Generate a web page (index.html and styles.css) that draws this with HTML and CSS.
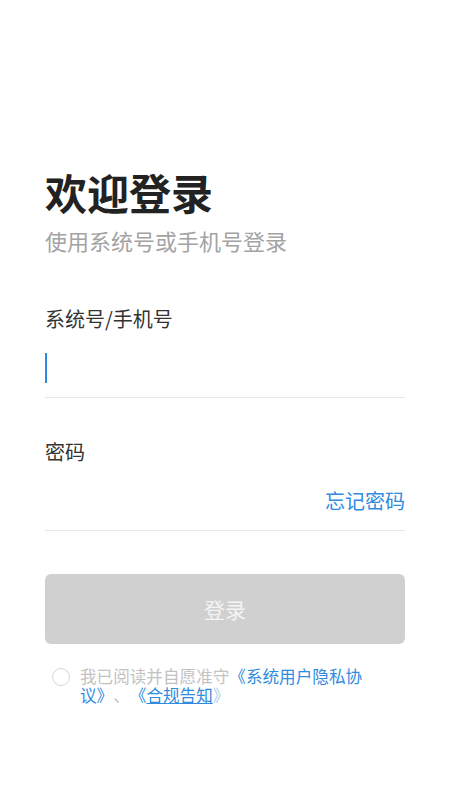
FILE: index.html
```html
<!DOCTYPE html>
<html lang="zh-CN">
<head>
    <meta charset="UTF-8">
    <meta name="viewport" content="width=device-width, initial-scale=1.0">
    <title>登录</title>
    <link rel="stylesheet" href="styles.css">
</head>
<body>
    <div class="login">
        <h1 class="title">欢迎登录</h1>
        <p class="subtitle">使用系统号或手机号登录</p>

        <div class="field">
            <label class="label">系统号/手机号</label>
            <div class="input-row">
                <span class="cursor"></span>
            </div>
        </div>

        <div class="field">
            <label class="label">密码</label>
            <div class="input-row">
                <a class="forgot" href="#">忘记密码</a>
            </div>
        </div>

        <button class="submit" disabled>登录</button>

        <div class="agree">
            <span class="radio"></span>
            <p class="agree-text">我已阅读并自愿准守<a class="link" href="#">《系统用户隐私协议》</a>、<a class="link" href="#">《<u>合规告知</u><span class="faded">》</span></a></p>
        </div>
    </div>
</body>
</html>
```

FILE: styles.css
```css
body {
    margin: 0;
    background: #fff;
    font-family: "Noto Sans CJK SC", "Noto Sans", sans-serif;
}

.login {
    padding: 171px 45px 0;
}

.title {
    margin: 0;
    font-size: 42px;
    line-height: 42px;
    font-weight: 700;
    color: #222;
}

.subtitle {
    margin: 16px 0 0;
    font-size: 22px;
    line-height: 22px;
    color: #a3a3a3;
}

.field {
    margin-top: 58px;
}

.field + .field {
    margin-top: 44px;
}

.label {
    display: block;
    font-size: 20px;
    line-height: 20px;
    color: #333;
}

.input-row {
    display: flex;
    align-items: center;
    height: 58px;
    margin-top: 10px;
    border-bottom: 1px solid #e6e6e6;
}

.cursor {
    width: 2px;
    height: 30px;
    background: #2f8be0;
}

.forgot {
    margin-left: auto;
    font-size: 20px;
    line-height: 20px;
    color: #2f8be0;
    text-decoration: none;
}

.submit {
    display: block;
    width: 100%;
    height: 70px;
    margin-top: 43px;
    border: none;
    border-radius: 6px;
    background: #d0d0d0;
    color: #f4f4f4;
    font-family: inherit;
    font-size: 21px;
}

.agree {
    display: flex;
    align-items: flex-start;
    margin-top: 23px;
}

.radio {
    width: 16px;
    height: 16px;
    margin: 1px 0 0 7px;
    border: 1px solid #d6d6d6;
    border-radius: 50%;
    flex-shrink: 0;
}

.agree-text {
    width: 290px;
    margin: 0 0 0 10px;
    font-size: 16.6px;
    line-height: 19px;
    color: #c2c2c2;
    text-spacing-trim: space-all;
}

.link {
    color: #2f8be0;
    text-decoration: none;
}

.faded {
    color: #a9cdef;
}
```
